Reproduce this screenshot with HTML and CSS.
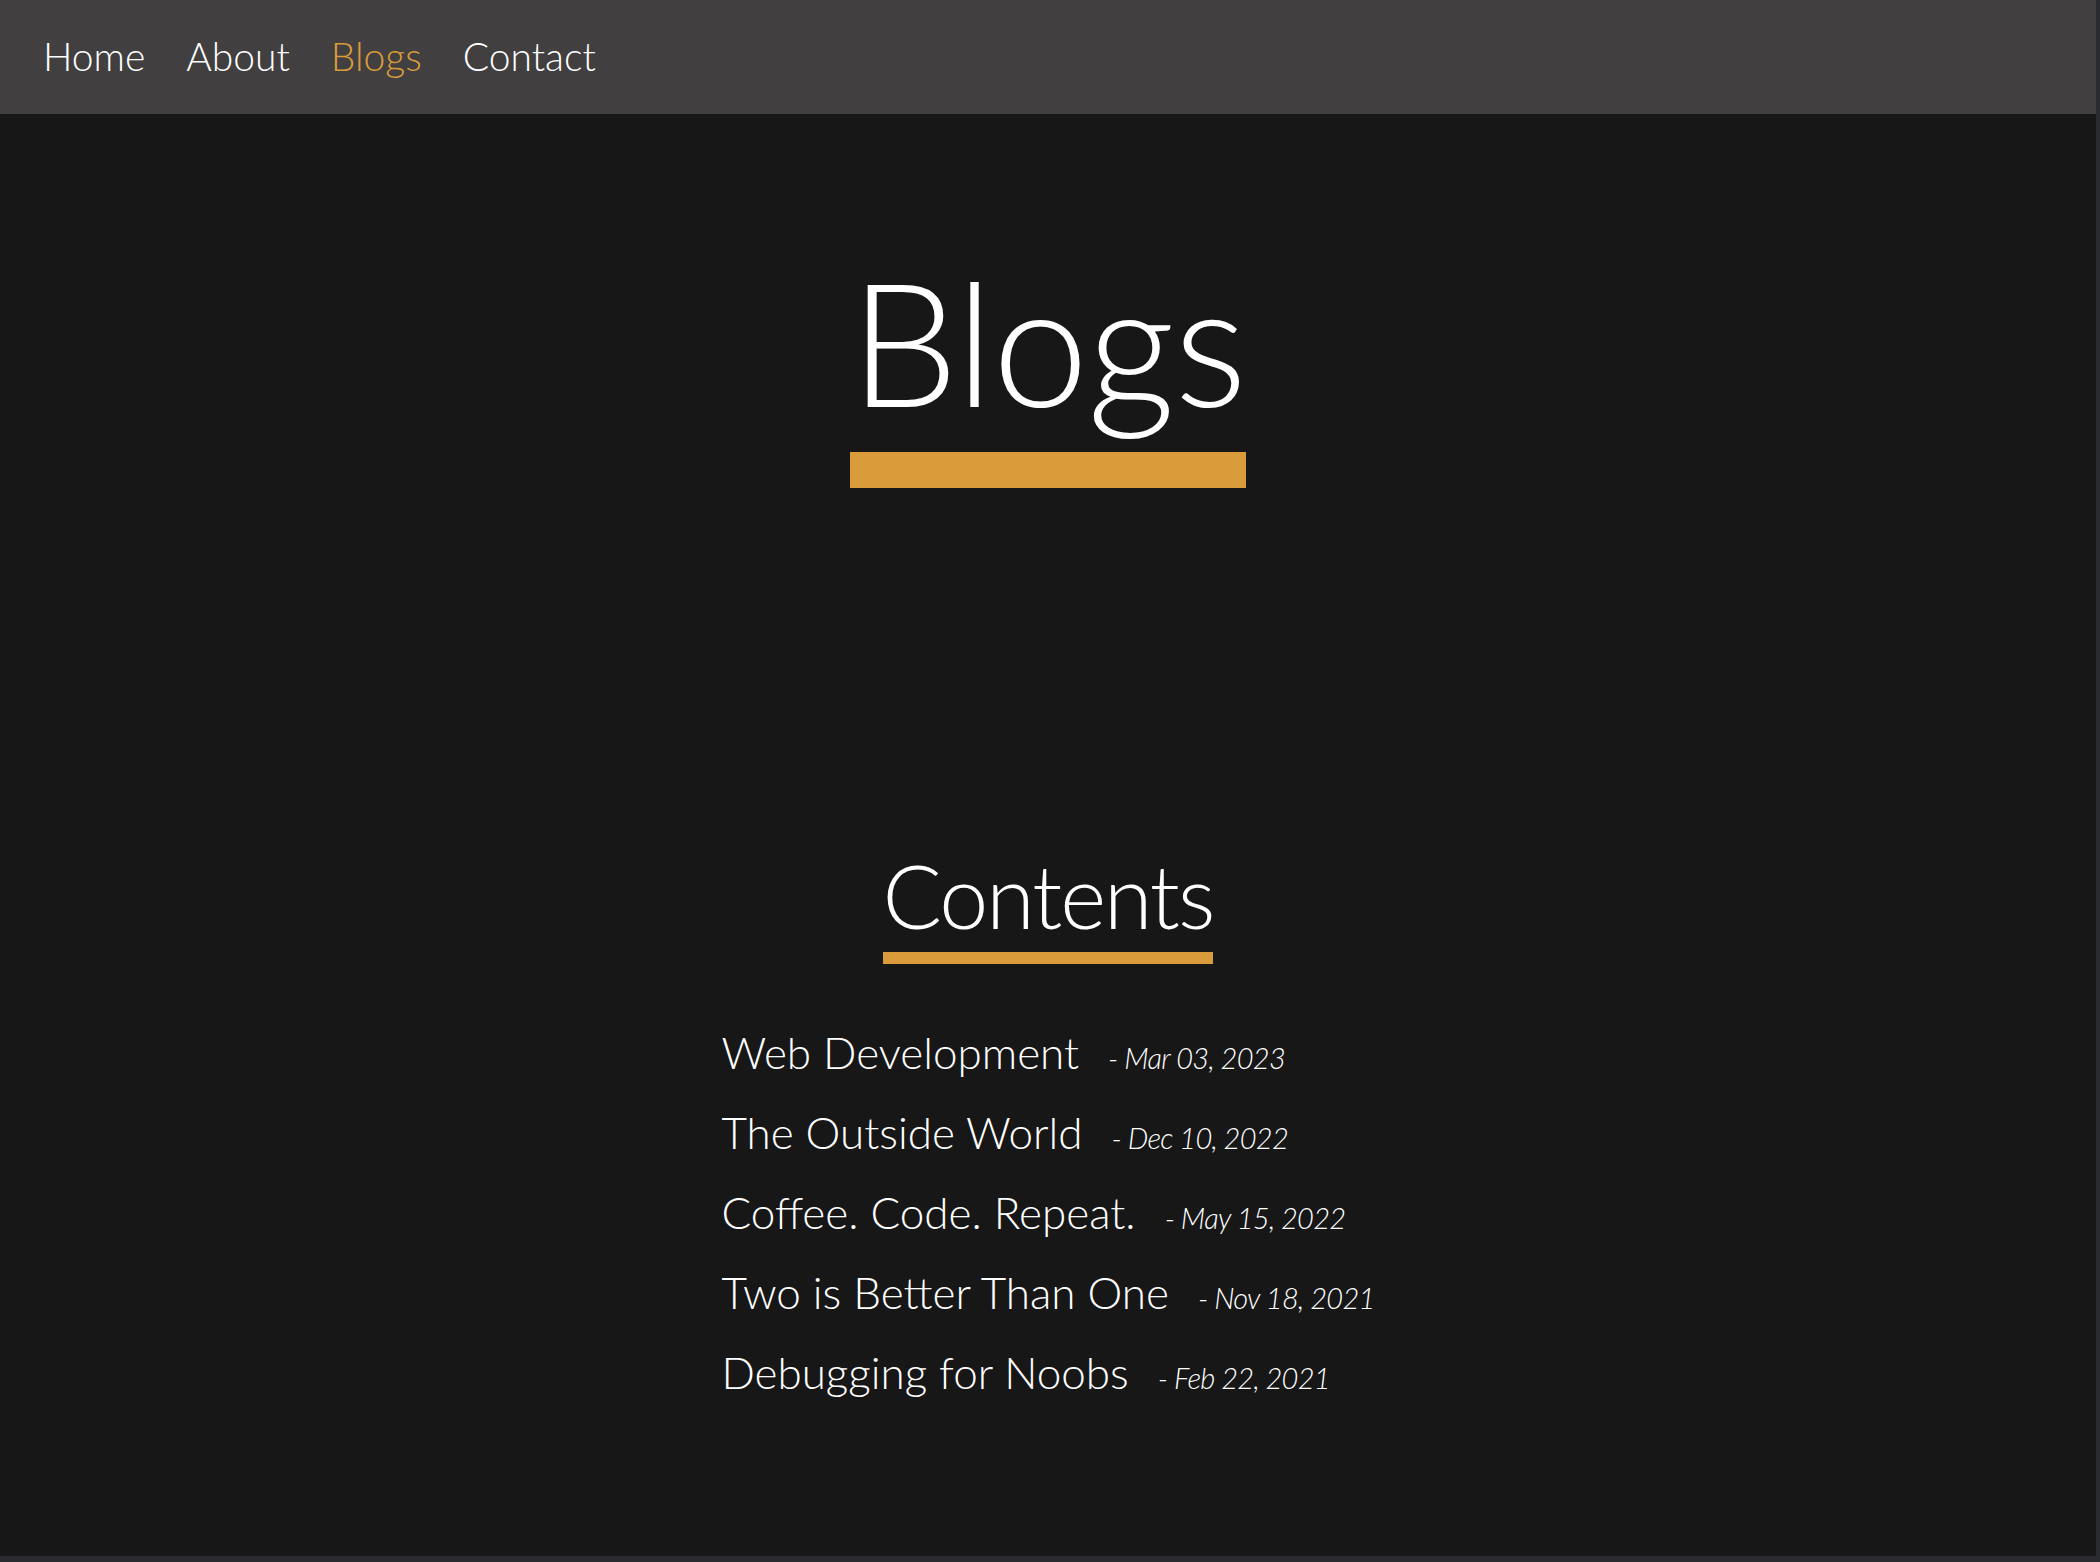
FILE: index.html
```html
<!DOCTYPE html>
<html lang="en">
<head>
<meta charset="utf-8">
<title>Blogs</title>
<link rel="stylesheet" href="styles.css">
</head>
<body>
<div class="frame">
  <nav class="topnav">
    <a class="nav-link" href="#">Home</a>
    <a class="nav-link" href="#">About</a>
    <a class="nav-link active" href="#">Blogs</a>
    <a class="nav-link" href="#">Contact</a>
  </nav>
  <main class="page">
    <header class="hero">
      <h1 class="hero-title">Blogs</h1>
    </header>
    <section class="contents">
      <h2 class="contents-title">Contents</h2>
      <ul class="post-list">
        <li class="post"><a class="post-link" href="#">Web Development</a><span class="post-date">- Mar 03, 2023</span></li>
        <li class="post"><a class="post-link" href="#">The Outside World</a><span class="post-date">- Dec 10, 2022</span></li>
        <li class="post"><a class="post-link" href="#">Coffee. Code. Repeat.</a><span class="post-date">- May 15, 2022</span></li>
        <li class="post"><a class="post-link" href="#">Two is Better Than One</a><span class="post-date">- Nov 18, 2021</span></li>
        <li class="post"><a class="post-link" href="#">Debugging for Noobs</a><span class="post-date">- Feb 22, 2021</span></li>
      </ul>
    </section>
  </main>
</div>
</body>
</html>
```
FILE: styles.css
```css
html, body {
  margin: 0;
  padding: 0;
}
body {
  background: #2a2b2f;
  font-family: "Lato", "Noto Sans", sans-serif;
  font-weight: 300;
  color: #ffffff;
}
.frame {
  width: calc(100% - 4px);
  height: 1556px;
  background: #171717;
  overflow: hidden;
}
.topnav {
  height: 114px;
  background: #413f40;
  display: flex;
  align-items: center;
  gap: 41px;
  padding-left: 43px;
}
.nav-link {
  font-size: 39px;
  color: #ffffff;
  text-decoration: none;
  line-height: 1.2;
  margin-top: -2px;
}
.nav-link.active {
  color: #da9c3a;
}
.page {
  display: flex;
  flex-direction: column;
  align-items: center;
}
.hero {
  padding-top: 124px;
  text-align: center;
}
.hero-title {
  display: inline-block;
  margin: 0;
  font-size: 172px;
  font-weight: 300;
  line-height: 1.2;
  letter-spacing: -1px;
  padding: 0 0 8px;
  border-bottom: 36px solid #da9c3a;
}
.contents {
  margin-top: 355px;
  display: flex;
  flex-direction: column;
  align-items: center;
}
.contents-title {
  display: inline-block;
  margin: 0;
  font-size: 88px;
  font-weight: 300;
  line-height: 1.2;
  letter-spacing: -2px;
  padding-bottom: 3px;
  border-bottom: 12px solid #da9c3a;
}
.post-list {
  list-style: none;
  margin: 48px 0 0;
  padding: 0;
}
.post {
  font-size: 44px;
  line-height: 80px;
}
.post-link {
  color: #ffffff;
  text-decoration: none;
}
.post-date {
  margin-left: 29px;
  font-size: 29px;
  font-style: italic;
  letter-spacing: -0.7px;
  line-height: 1;
}
```
